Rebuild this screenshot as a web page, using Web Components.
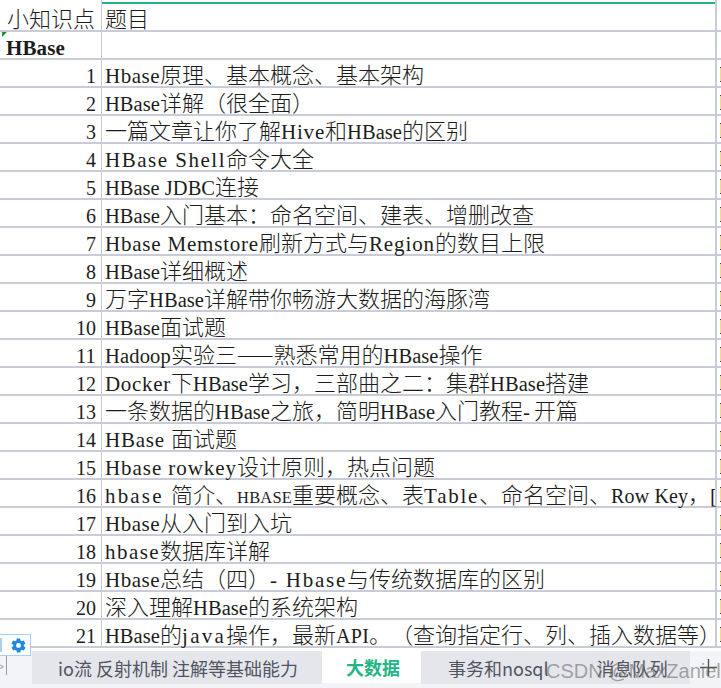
<!DOCTYPE html>
<html><head><meta charset="utf-8"><style>
html,body{margin:0;height:688px;width:721px;overflow:hidden;background:#fff}
</style></head><body>
<x-sheet>
<x-row head a="小知识点" b="题目"></x-row>
<x-row bold a="HBase"></x-row>
<x-row n="1" b="Hbase原理、基本概念、基本架构"></x-row>
<x-row n="2" b="HBase详解（很全面）"></x-row>
<x-row n="3" b="一篇文章让你了解Hive和HBase的区别"></x-row>
<x-row n="4" b="HBase Shell命令大全"></x-row>
<x-row n="5" b="HBase JDBC连接"></x-row>
<x-row n="6" b="HBase入门基本：命名空间、建表、增删改查"></x-row>
<x-row n="7" b="Hbase Memstore刷新方式与Region的数目上限"></x-row>
<x-row n="8" b="HBase详细概述"></x-row>
<x-row n="9" b="万字HBase详解带你畅游大数据的海豚湾"></x-row>
<x-row n="10" b="HBase面试题"></x-row>
<x-row n="11" b="Hadoop实验三——熟悉常用的HBase操作"></x-row>
<x-row n="12" b="Docker下HBase学习，三部曲之二：集群HBase搭建"></x-row>
<x-row n="13" b="一条数据的HBase之旅，简明HBase入门教程-开篇"></x-row>
<x-row n="14" b="HBase 面试题"></x-row>
<x-row n="15" b="Hbase rowkey设计原则，热点问题"></x-row>
<x-row n="16" b="hbase 简介、HBASE重要概念、表Table、命名空间、Row Key，["></x-row>
<x-row n="17" b="Hbase从入门到入坑"></x-row>
<x-row n="18" b="hbase数据库详解"></x-row>
<x-row n="19" b="Hbase总结（四）- Hbase与传统数据库的区别"></x-row>
<x-row n="20" b="深入理解HBase的系统架构"></x-row>
<x-row n="21" b="HBase的java操作，最新API。（查询指定行、列、插入数据等）"></x-row>
<x-tabs></x-tabs>
</x-sheet>
<script>
const cv=document.createElement('canvas').getContext('2d');
const runs=(s,cell,bold)=>s.split(/([\x20-\x7e]+)/).filter(Boolean).map(r=>{
 if(!/^[\x20-\x7e]/.test(r))return `<span class="c">${r}</span>`;
 const target=(bold?11.8:cell)*r.length;
 let fs=21,w;
 do{cv.font=(bold?'700 ':'')+fs+'px "Liberation Serif"';w=cv.measureText(r).width;if(w<=target)break;fs-=.5}while(fs>14);
 return `<span class="l" style="font-size:${fs}px;letter-spacing:${((target-w)/r.length).toFixed(2)}px">${r}</span>`}).join('');
customElements.define('x-sheet',class extends HTMLElement{constructor(){super();this.attachShadow({mode:'open'}).innerHTML=`<style>
:host{display:flex;flex-direction:column;width:721px;height:688px;position:relative;overflow:hidden;box-sizing:border-box}
.bar{position:absolute;left:102px;width:613px;top:2px;height:2px;background:#22b585}
.tri{position:absolute;left:2px;top:32px;border-top:5px solid #1f8f3f;border-right:5px solid transparent}
.gear{position:absolute;left:0;top:634px;width:31px;height:22px;box-sizing:border-box;background:#fff;border:1px solid #a9cdf2;border-left:0;display:flex;align-items:center;padding-left:10px}
.gear i{position:absolute;left:0;top:3px;width:2px;height:14px;background:#a8cff5}
.mark{position:absolute;left:546px;top:659px;font:20px/24px "Liberation Sans",sans-serif;color:rgba(110,110,110,.6);white-space:nowrap}
.plus{position:absolute;left:700px;top:659px}
</style><slot></slot><div class="bar"></div><div class="tri"></div>
<div class="gear"><i></i><svg width="17" height="17" viewBox="0 0 24 24"><path fill="#1e88e5" fill-rule="evenodd" d="M19.4 13c.1-.3.1-.7.1-1s0-.7-.1-1l2.1-1.6c.2-.2.2-.4.1-.6l-2-3.5c-.1-.2-.4-.3-.6-.2l-2.5 1c-.5-.4-1.1-.7-1.7-1l-.4-2.6c0-.3-.2-.5-.5-.5h-4c-.3 0-.5.2-.5.4l-.4 2.7c-.6.2-1.1.6-1.7 1l-2.5-1c-.2-.1-.5 0-.6.2l-2 3.5c-.1.2-.1.5.1.6L4.6 11c-.1.3-.1.7-.1 1s0 .7.1 1l-2.1 1.6c-.2.2-.2.4-.1.6l2 3.5c.1.2.4.3.6.2l2.5-1c.5.4 1.1.7 1.7 1l.4 2.6c0 .3.2.5.5.5h4c.3 0 .5-.2.5-.4l.4-2.7c.6-.2 1.1-.6 1.7-1l2.5 1c.2.1.5 0 .6-.2l2-3.5c.1-.2.1-.5-.1-.6zM12 15.5a3.5 3.5 0 1 1 0-7 3.5 3.5 0 0 1 0 7z"/></svg></div>
<div class="mark">CSDN @MaxZaniel</div>
<svg class="plus" width="17" height="17"><path d="M0 8.5H17M8.5 0V17" stroke="#555" stroke-width="1.4"/></svg>`}});
customElements.define('x-row',class extends HTMLElement{connectedCallback(){const g=k=>this.getAttribute(k)||'';const bold=this.hasAttribute('bold');
const a=g('n')?`<div class="a num">${runs(g('n'),10)}</div>`:`<div class="a ${bold?'bold':''}">${runs(g('a'),11,bold)}</div>`;
const last=g('n')?'<i class="stub"></i>':'<i></i>';
this.attachShadow({mode:'open'}).innerHTML=`<style>
:host{display:grid;grid-template-columns:101px 1px 613px 2px 3px 1px;height:28px;box-sizing:border-box;border-bottom:2px solid #c9ccd8;color:#1c1c1c;white-space:nowrap}
:host([head]){height:32px}
.a,.b{display:block;height:26px;font:300 22px/26px "Noto Sans CJK SC",sans-serif;box-sizing:border-box;text-spacing-trim:space-all}
:host([head]) .a,:host([head]) .b{padding-top:4px;height:30px}
.a{padding-left:7px}.a.bold{padding-left:6px;font-weight:700}
.a.num{text-align:right;padding:0 5px 0 0}
.b{padding-left:3px}
.l{font-family:"Liberation Serif",serif;white-space:pre}
.c{white-space:pre}
.v{background:#c9ccd8}
.stub{display:block;height:15px;margin-top:7px;background:#f6d98a;box-shadow:inset 0 1px #444,inset 0 -1px #444}
</style>${a}<div class="v"></div><div class="b">${runs(g('b'),11)}</div><div class="v"></div><span></span>${last}`}});
customElements.define('x-tabs',class extends HTMLElement{connectedCallback(){this.attachShadow({mode:'open'}).innerHTML=`<style>
:host{display:flex;height:37px;background:#f3f4f7;font:18px "Noto Sans CJK SC",sans-serif;color:#50555f;margin-top:3px;padding-left:32px;white-space:nowrap;position:relative}
.t{height:33px;display:flex;align-items:center;justify-content:center;background:#e5e6ec;box-sizing:border-box}
.first{padding-left:2px}
.on{background:#fff;color:#22b585;font-weight:700;height:32px;padding-left:3px}
.rest{flex:none;width:269px;justify-content:flex-start;padding-left:27px}
.rest span:last-child{margin-left:48px;letter-spacing:-.3px}
.side{position:absolute;left:6px;top:0;width:1px;height:24px;background:#9a9a9a}
.arrow{position:absolute;left:-3px;top:9px;font:12px "Liberation Sans",sans-serif;color:#aaa}
</style><i class="side"></i><span class="arrow">&gt;</span><div class="t first" style="width:290px">io流 反射机制 注解等基础能力</div><div class="t on" style="width:99px">大数据</div><div class="t rest"><span>事务和nosql</span><span>消息队列</span></div>`}});
</script>
</body></html>
